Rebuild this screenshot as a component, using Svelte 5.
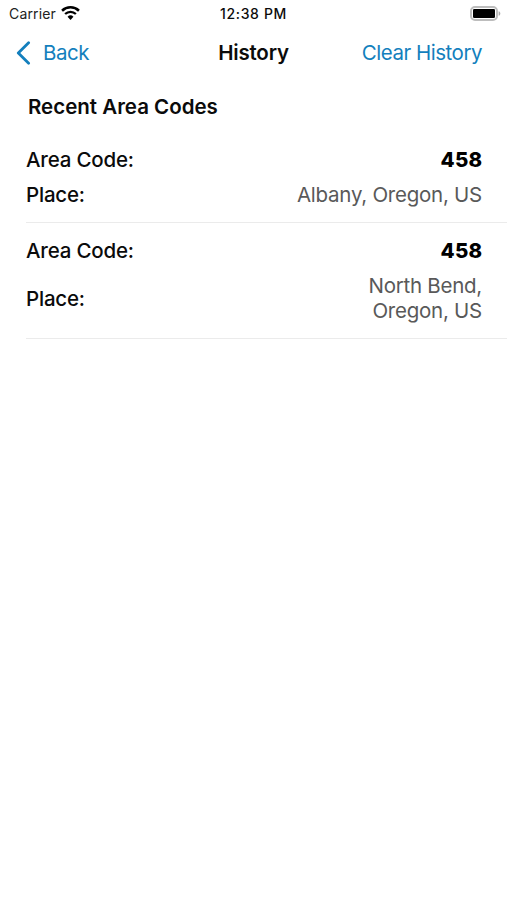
<script lang="ts">
    type Entry = {code: string, place: string};

    let entries: Entry[] = $state([
        {code: "458", place: "Albany, Oregon, US"},
        {code: "458", place: "North Bend, Oregon, US"}
    ]);

    function clearHistory() {
        entries = [];
    }
</script>

<div class="screen">
    <div class="status">
        <div class="carrier">
            <span>Carrier</span>
            <svg class="wifi" width="19" height="15" viewBox="0 0 18 14">
                <path d="M1 4.4a11.5 11.5 0 0 1 16 0" fill="none" stroke="#000" stroke-width="2.4"/>
                <path d="M3.9 7.5a7.3 7.3 0 0 1 10.2 0" fill="none" stroke="#000" stroke-width="2.2"/>
                <path d="M6.2 10.1a4 4 0 0 1 5.6 0L9 13.1z"/>
            </svg>
        </div>
        <div class="time">12:38 PM</div>
        <div class="power">
            <svg width="31" height="15" viewBox="0 0 31 15">
                <rect x="1" y="1" width="26" height="13" rx="4" fill="#fff" stroke="#bdbdbd" stroke-width="2"/>
                <rect x="3" y="3" width="22" height="9" rx="1.3"/>
                <path d="M28.6 5.2v4.6c2.3-.7 2.3-3.9 0-4.6z" fill="#aaa"/>
            </svg>
        </div>
    </div>

    <div class="nav">
        <button class="back">
            <svg width="15" height="24" viewBox="0 0 15 24">
                <path d="M12.6 1.7L2.3 12l10.3 10.3" fill="none" stroke="#137fbd" stroke-width="2.8" stroke-linecap="round" stroke-linejoin="round"/>
            </svg>
            <span>Back</span>
        </button>
        <div class="title">History</div>
        <button class="clear" onclick={clearHistory}>Clear History</button>
    </div>

    <h2>Recent Area Codes</h2>

    <ul>
        {#each entries as entry}
            <li>
                <div class="row">
                    <span class="label">Area Code:</span>
                    <span class="code">{entry.code}</span>
                </div>
                <div class="row">
                    <span class="label">Place:</span>
                    <span class="place">{entry.place}</span>
                </div>
            </li>
        {/each}
    </ul>
</div>

<style>
    :global(body) {
        background: #fff;
    }

    .screen {
        box-sizing: border-box;
        height: 900px;
        overflow: hidden;
        color: #0b0b0b;
        font-family: Inter, Roboto, sans-serif;
        font-size: 20.5px;
        line-height: 24.5px;
    }

    .status {
        display: grid;
        grid-template-columns: 1fr auto 1fr;
        align-items: center;
        height: 27px;
        padding: 0 6px;
        font-size: 14px;
        line-height: 27px;
    }

    .carrier {
        display: flex;
        align-items: center;
        gap: 5px;
        padding-left: 3px;
        color: #222;
        letter-spacing: 0.15px;
    }

    .time {
        font-weight: 500;
        letter-spacing: 0.65px;
    }

    .power {
        display: flex;
        justify-content: flex-end;
    }

    .nav {
        display: grid;
        grid-template-columns: 1fr auto 1fr;
        align-items: center;
        height: 51px;
        padding: 0 25px 0 16px;
    }

    button {
        padding: 0;
        border: 0;
        background: none;
        color: #137fbd;
        font: inherit;
        letter-spacing: -0.48px;
    }

    .back {
        display: flex;
        align-items: center;
        gap: 12px;
    }

    .back span,
    .clear,
    .title {
        padding-top: 2px;
    }

    .clear {
        justify-self: end;
    }

    .title {
        padding-left: 9px;
        font-weight: 600;
        letter-spacing: -0.2px;
    }

    h2 {
        margin: 17px 0 12px 28px;
        font-size: 20.5px;
        font-weight: 600;
    }

    ul {
        margin: 0 0 0 26px;
        padding: 0;
        list-style: none;
    }

    li {
        display: flex;
        flex-direction: column;
        gap: 10.75px;
        padding: 16px 25px 14.75px 0;
        border-bottom: 1px solid #ebebeb;
    }

    .row {
        display: flex;
        align-items: center;
        justify-content: space-between;
    }

    .label {
        font-weight: 500;
        letter-spacing: -0.2px;
    }

    .code {
        margin-right: -0.5px;
        color: #000;
        font-weight: 800;
        letter-spacing: 0.3px;
    }

    .place {
        max-width: 190px;
        color: #595959;
        letter-spacing: -0.25px;
        text-align: right;
    }
</style>
